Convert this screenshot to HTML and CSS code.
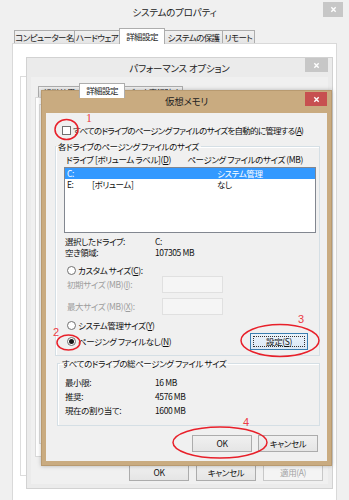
FILE: index.html
```html
<!DOCTYPE html>
<html lang="ja">
<head>
<meta charset="utf-8">
<title>仮想メモリ</title>
<link rel="stylesheet" href="styles.css">
</head>
<body>
<div class="desk">

  <section class="win win-sys">
    <header class="titlebar">
      <span class="title">システムのプロパティ</span>
      <span class="close close-gray"><svg viewBox="0 0 8 8"><path d="M1.5 1.5L6.5 6.5M6.5 1.5L1.5 6.5"/></svg></span>
    </header>
    <div class="tabs tabs-sys">
      <span class="tab t-a">コンピューター名</span>
      <span class="tab t-b">ハードウェア</span>
      <span class="tab t-c sel">詳細設定</span>
      <span class="tab t-d">システムの保護</span>
      <span class="tab t-e">リモート</span>
    </div>
    <div class="tabpage tabpage-sys">
      <div class="grp-bg"></div>
    </div>
  </section>

  <section class="win win-perf">
    <header class="titlebar">
      <span class="title">パフォーマンス オプション</span>
      <span class="close close-gray"><svg viewBox="0 0 8 8"><path d="M1.5 1.5L6.5 6.5M6.5 1.5L1.5 6.5"/></svg></span>
    </header>
    <div class="client perf-client">
      <div class="tabs tabs-perf">
        <span class="tab p-a">視覚効果</span>
        <span class="tab p-b sel">詳細設定</span>
        <span class="tab p-c">データ実行防止</span>
      </div>
      <div class="tabpage tabpage-perf">
        <div class="grp-bg2"></div>
      </div>
      <div class="btn-row perf-btns">
        <span class="btn">OK</span>
        <span class="btn">キャンセル</span>
        <span class="btn disabled">適用(A)</span>
      </div>
    </div>
  </section>

  <section class="win win-vm">
    <header class="titlebar">
      <span class="title">仮想メモリ</span>
      <span class="close close-red"><svg viewBox="0 0 8 8"><path d="M1.5 1.5L6.5 6.5M6.5 1.5L1.5 6.5"/></svg></span>
    </header>
    <div class="client vm-client">
      <div class="chk-row"><span class="chk"></span><span class="chk-text">すべてのドライブのページング ファイルのサイズを自動的に管理する(<u>A</u>)</span></div>

      <fieldset class="grp g1">
        <legend>各ドライブのページング ファイルのサイズ</legend>
        <div class="lst-head"><span>ドライブ [ボリューム ラベル](<u>D</u>)</span><span>ページング ファイルのサイズ (MB)</span></div>
        <div class="lst">
          <div class="lst-row sel"><span>C:</span><span></span><span>システム管理</span></div>
          <div class="lst-row"><span>E:</span><span>[ボリューム]</span><span>なし</span></div>
        </div>
        <div class="info">
          <span>選択したドライブ:</span><span>C:</span>
          <span>空き領域:</span><span>107305 MB</span>
        </div>
        <div class="radio-row r-custom"><span class="rad"></span><span>カスタム サイズ(<u>C</u>):</span></div>
        <div class="field-row f1"><span class="dis">初期サイズ (MB)(<u>I</u>):</span><span class="tb"></span></div>
        <div class="field-row f2"><span class="dis">最大サイズ (MB)(<u>X</u>):</span><span class="tb"></span></div>
        <div class="radio-row r-sys"><span class="rad"></span><span>システム管理サイズ(<u>Y</u>)</span></div>
        <div class="radio-row r-none"><span class="rad on"></span><span>ページング ファイルなし(<u>N</u>)</span><span class="btn focus"><span class="focus-in">設定(<u>S</u>)</span></span></div>
      </fieldset>

      <fieldset class="grp g2">
        <legend>すべてのドライブの総ページング ファイル サイズ</legend>
        <div class="totals">
          <span>最小限:</span><span>16 MB</span>
          <span>推奨:</span><span>4576 MB</span>
          <span>現在の割り当て:</span><span>1600 MB</span>
        </div>
      </fieldset>

      <div class="btn-row vm-btns">
        <span class="btn">OK</span>
        <span class="btn">キャンセル</span>
      </div>
    </div>
  </section>

  <svg class="marks" width="349" height="500" viewBox="0 0 349 500">
    <ellipse cx="66.5" cy="129.5" rx="11.5" ry="10"/>
    <ellipse cx="68.5" cy="342.5" rx="11.5" ry="7.5"/>
    <ellipse cx="280" cy="340.5" rx="39" ry="16"/>
    <ellipse cx="220" cy="442.5" rx="47" ry="15.5"/>
    <text class="n1" x="86" y="122">1</text>
    <text x="53" y="336">2</text>
    <text x="298" y="323">3</text>
    <text x="243" y="426">4</text>
  </svg>
</div>
</body>
</html>
```

FILE: styles.css
```css
* { box-sizing: border-box; }
html, body { margin: 0; padding: 0; }
body {
  width: 349px;
  height: 500px;
  overflow: hidden;
  background: #fff;
  font-family: "Noto Sans CJK JP", "Noto Sans", sans-serif;
  font-size: 8.5px;
  line-height: 11px;
  letter-spacing: -0.4px;
  font-feature-settings: "palt";
  color: #111;
}
u { text-decoration: underline; text-underline-offset: 1px; }

.desk { position: relative; width: 349px; height: 500px; }

.win { position: absolute; display: flex; flex-direction: column; }

/* title bars */
.titlebar {
  display: grid;
  grid-template-columns: 1fr auto 1fr;
  align-items: start;
  flex: none;
}
.titlebar .title {
  grid-column: 2;
  font-size: 9.5px;
  line-height: 14px;
  letter-spacing: -0.2px;
  color: #222;
  white-space: nowrap;
}
.close {
  grid-column: 3;
  justify-self: end;
  display: flex;
  align-items: center;
  justify-content: center;
}
.close svg { width: 7px; height: 7px; }
.close path { stroke: #fff; stroke-width: 1.6; fill: none; }
.close-gray { background: #c7c7c7; }
.close-red { background: #c75050; }

/* tabs */
.tabs { display: flex; align-items: flex-end; flex: none; }
.tab {
  height: 13px;
  border: 1px solid #adadad;
  border-bottom: none;
  margin-right: -1px;
  background: linear-gradient(#f0f0f0, #e5e5e5);
  display: flex;
  align-items: center;
  justify-content: center;
  white-space: nowrap;
  overflow: hidden;
  letter-spacing: -0.6px;
  color: #222;
}
.tab.sel {
  height: 16px;
  background: #fff;
  position: relative;
  z-index: 1;
  margin-bottom: -1px;
  padding-bottom: 1px;
}
.tabpage { background: #fff; border: 1px solid #d9d9d9; flex: 1; }

/* system properties (back) */
.win-sys {
  left: 0; top: 0;
  width: 349px; height: 520px;
  background: #f0f0f0;
  padding: 0 4px;
}
.win-sys .titlebar { height: 28px; }
.win-sys .title { padding-top: 5px; }
.win-sys .close { width: 20px; height: 15px; margin: 2px 2px 0 0; }
.tabs-sys { margin: 0 8px; padding-left: 2px; height: 15px; }
.t-a { width: 61px; }
.t-b { width: 46px; }
.t-c { width: 46px; }
.t-d { width: 59px; }
.t-e { width: 33px; }
.tabpage-sys { margin: 0 8px; }
.grp-bg {
  margin: 32px 0 0 7px;
  width: 300px;
  height: 400px;
  border: 1px solid #dcdcdc;
  background: #fff;
}

/* performance options (middle) */
.win-perf {
  left: 26px; top: 57px;
  width: 307px; height: 432px;
  background: #ebebeb;
  border: 1px solid #d2d2d2;
  padding: 0 4px 4px;
}
.win-perf .titlebar { height: 19px; }
.win-perf .title { padding-top: 3px; }
.win-perf .close { width: 23px; height: 14px; }
.client { flex: 1; background: #f0f0f0; display: flex; flex-direction: column; min-height: 0; }
.perf-client { padding: 6px 4px 3px; }
.tabs-perf { padding-left: 3px; height: 14px; }
.tabs-perf .tab { height: 11px; }
.tabs-perf .tab.sel { height: 15px; }
.p-a { width: 42px; }
.p-b { width: 46px; }
.p-c { width: 59px; }
.tabpage-perf { padding: 6px 0 0 3px; }
.grp-bg2 { width: 280px; height: 340px; border: 1px solid #dcdcdc; background: #fafafa; }
.perf-btns { margin-top: 7px; padding-right: 1px; gap: 7px; }

/* buttons */
.btn-row { display: flex; justify-content: flex-end; flex: none; }
.btn {
  width: 60px;
  height: 17px;
  border: 1px solid #acacac;
  background: linear-gradient(#f0f0f0, #e5e5e5);
  display: flex;
  align-items: center;
  justify-content: center;
  color: #111;
  white-space: nowrap;
}
.btn.disabled { color: #a3a3a3; border-color: #c8c8c8; background: #f4f4f4; }
.btn.focus {
  margin-left: auto;
  margin-right: 8px;
  width: 58px;
  border-color: #3c7fb1;
  background: linear-gradient(#eaf3fb, #dbe8f5);
  padding: 2px;
}
.focus-in {
  flex: 1;
  align-self: stretch;
  border: 1px dotted #333;
  display: flex;
  align-items: center;
  justify-content: center;
}

/* virtual memory (front) */
.win-vm {
  left: 41px; top: 90px;
  width: 291px; height: 376px;
  background: #c9ab80;
  border: 1px solid #b89a70;
  padding: 0 4px 4px;
  box-shadow: 0 0 4px rgba(0,0,0,0.25);
}
.win-vm .titlebar { height: 22px; }
.win-vm .title { padding-top: 3px; }
.win-vm .close { width: 22px; height: 14px; margin-top: 1px; }
.vm-client { padding: 11px 7px 0 9px; }

.chk-row {
  display: flex;
  align-items: center;
  height: 12px;
  margin-left: 7px;
  white-space: nowrap;
}
.chk-text { letter-spacing: -0.75px; }
.chk {
  width: 9px; height: 9px;
  border: 1px solid #707070;
  background: #fff;
  margin-right: 2px;
  flex: none;
}

.grp {
  margin: 0;
  min-width: 0;
  border: 1px solid #d5dfe5;
  box-shadow: inset 1px 1px 0 #fff;
}
.grp legend { padding: 0 2px; line-height: 11px; color: #111; white-space: nowrap; }
.g1 { margin-top: 5px; padding: 2px 3px 5px 8px; }
.g1 legend { margin-left: -8px; }
.g2 { margin: 2px 0 0 2px; padding: 6px 3px 8px 7px; }
.g2 legend { margin-left: -5px; }

.lst-head {
  display: flex;
  justify-content: space-between;
  padding: 0 13px 0 2px;
  line-height: 10px;
  white-space: nowrap;
}
.lst {
  margin-top: 3px;
  height: 66px;
  border: 1px solid #828790;
  background: #fff;
}
.lst-row {
  display: grid;
  grid-template-columns: 25px 125px 1fr;
  height: 11px;
  line-height: 11px;
  padding-left: 2px;
  white-space: nowrap;
}
.lst-row.sel { background: #3399ff; color: #fff; }

.info, .totals {
  display: grid;
  grid-template-columns: 90px 1fr;
  white-space: nowrap;
}
.info { margin: 3px 0 0 1px; line-height: 11px; }
.totals { line-height: 14px; }

.radio-row {
  display: flex;
  align-items: center;
  height: 12px;
  padding-left: 3px;
  white-space: nowrap;
}
.r-custom { margin-top: 6px; }
.r-sys { margin-top: 4px; }
.r-none { margin-top: 2px; height: 17px; }
.rad {
  width: 9px; height: 9px;
  border: 1px solid #707070;
  border-radius: 50%;
  background: #fff;
  margin-right: 2px;
  flex: none;
  display: flex;
  align-items: center;
  justify-content: center;
}
.rad.on::after {
  content: "";
  width: 5px; height: 5px;
  border-radius: 50%;
  background: #1a1a1a;
}

.field-row {
  display: flex;
  align-items: center;
  height: 17px;
  padding-left: 3px;
  white-space: nowrap;
}
.f2 { margin-top: 5px; }
.dis { width: 95px; color: #9d9d9d; }
.tb {
  width: 61px;
  height: 17px;
  border: 1px solid #e0e0e0;
  background: #f5f5f5;
}

.vm-btns { margin-top: 9px; padding-right: 2px; gap: 6px; }

/* annotation overlay */
.marks { position: absolute; left: 0; top: 0; pointer-events: none; }
.marks ellipse { fill: none; stroke: #e8202a; stroke-width: 1.5; }
.marks text {
  fill: #ec3b45;
  font-family: "Liberation Sans", sans-serif;
  font-size: 11px;
  letter-spacing: 0;
}
.marks .n1 { font-family: "Liberation Serif", serif; font-size: 12px; }
```
